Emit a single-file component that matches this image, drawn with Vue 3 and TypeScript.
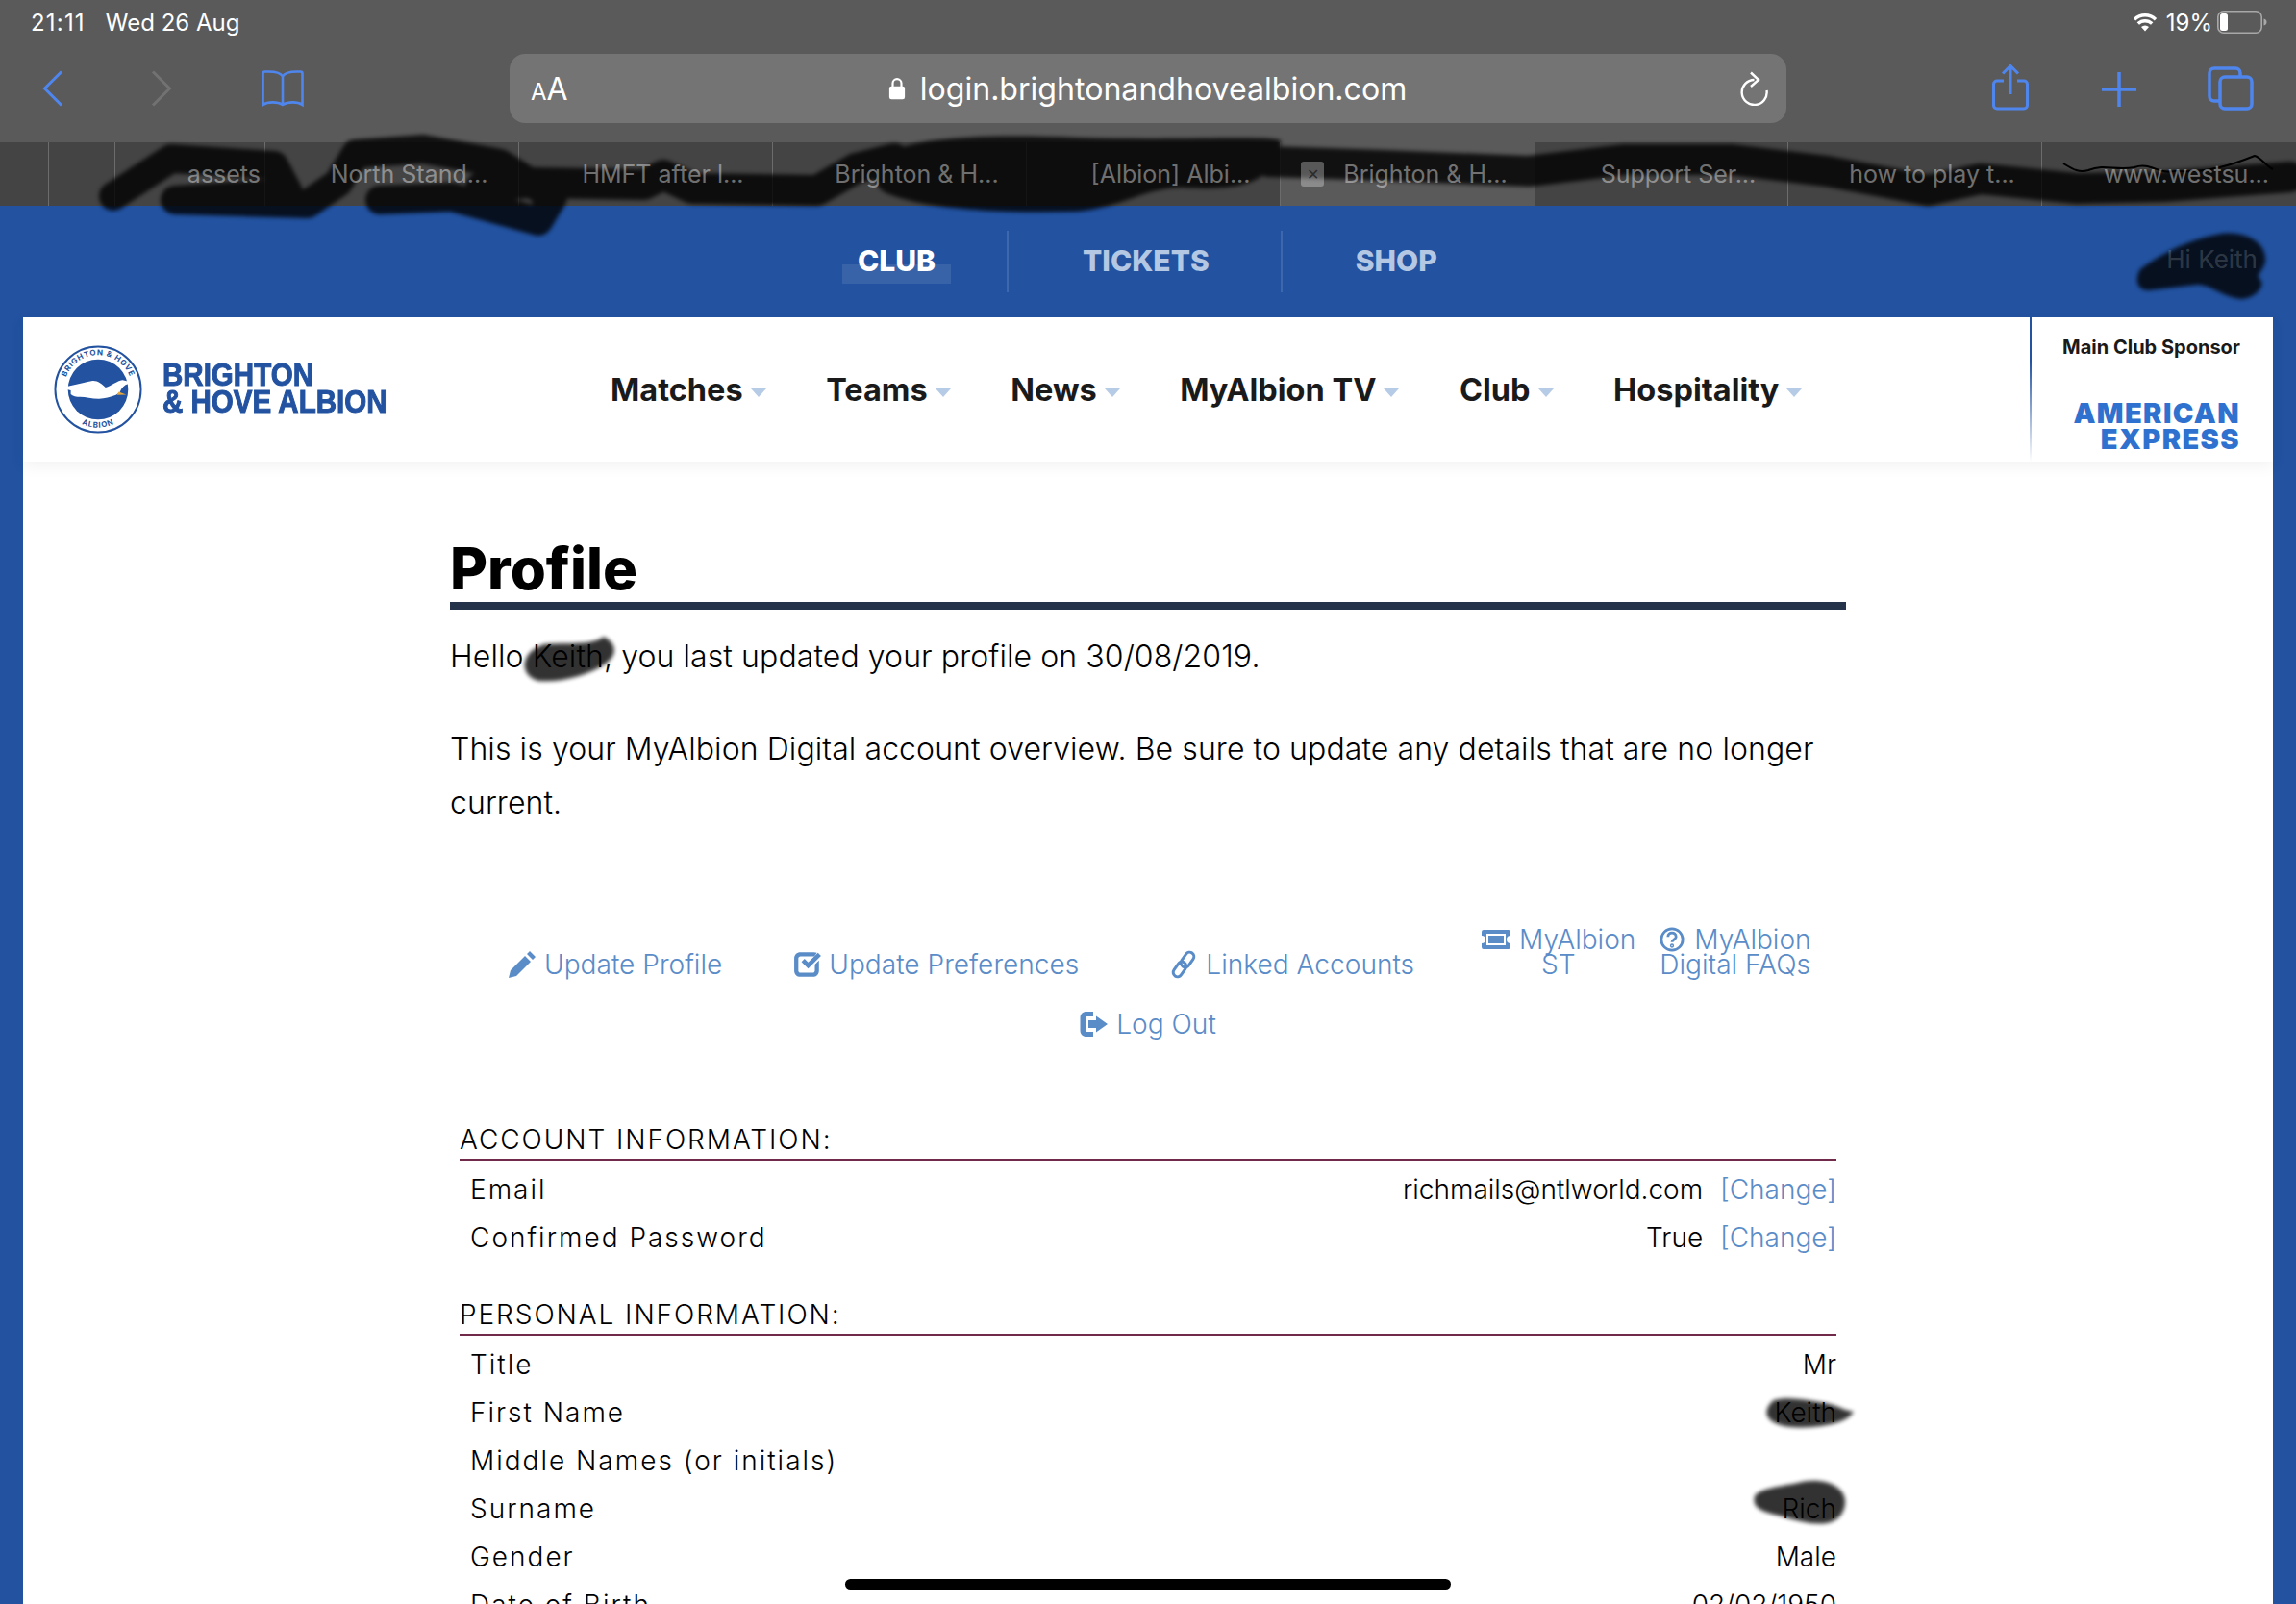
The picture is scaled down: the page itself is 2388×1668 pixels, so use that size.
<script setup lang="ts">
// iPad Safari showing the Albion "Profile" page, scribbles laid on top.
const tabs = [
  { label: '', width: 51 },
  { label: '', width: 69 },
  { label: 'assets', width: 156, clip: true },
  { label: 'North Stand...', width: 264 },
  { label: 'HMFT after l...', width: 264 },
  { label: 'Brighton & H...', width: 264 },
  { label: '[Albion] Albi...', width: 264 },
  { label: 'Brighton & H...', width: 264, active: true },
  { label: 'Support Ser...', width: 264 },
  { label: 'how to play t...', width: 264 },
  { label: 'www.westsu...', width: 264 },
]
const mainNav = ['Matches', 'Teams', 'News', 'MyAlbion TV', 'Club', 'Hospitality']
const personal = [
  ['Title', 'Mr'],
  ['First Name', 'Keith'],
  ['Middle Names (or initials)', ''],
  ['Surname', 'Rich'],
  ['Gender', 'Male'],
  ['Date of Birth', '02/02/1950'],
]
</script>

<template>
  <div class="page">
    <header class="safari">
      <div class="status">
        <span class="time">21:11</span>
        <span class="date">Wed 26 Aug</span>
        <span class="spacer"></span>
        <svg class="wifi" viewBox="0 0 26 20" width="26" height="20">
          <path d="M13 19.500 9 15a6 6 0 0 1 8 0Z" fill="#fff" />
          <path d="M5.800 11.600a10.400 10.400 0 0 1 14.400 0M2 7.200a16 16 0 0 1 22 0" fill="none" stroke="#fff" stroke-width="3.400" />
        </svg>
        <span class="pct">19%</span>
        <svg class="battery" viewBox="0 0 52 24" width="52" height="24">
          <rect x="0.800" y="0.800" width="45.400" height="22.400" rx="6" fill="none" stroke="#a8a8a8" stroke-width="1.600" />
          <rect x="3" y="3" width="8" height="18" rx="2.500" fill="#fff" />
          <path d="M48.500 8.500c2 .6 3 1.800 3 3.500s-1 2.900-3 3.500Z" fill="#a8a8a8" />
        </svg>
      </div>
      <div class="toolbar">
        <svg class="tool back" viewBox="0 0 22 38" width="22" height="38"><path d="M20 1.500 2.500 19 20 36.500" /></svg>
        <svg class="tool fwd" viewBox="0 0 22 38" width="22" height="38"><path d="M2 1.500 19.500 19 2 36.500" /></svg>
        <svg class="tool book" viewBox="0 0 44 38" width="44" height="38">
          <path d="M22 6.500C20 2.500 15 1.500 7 1.500H3.500C2 1.500 1.500 2.200 1.500 3.500V36c5-3.500 15-3.500 20.500 0 5.500-3.500 15.500-3.500 20.500 0V3.500c0-1.300-.5-2-2-2H37c-8 0-13 1-15 5Zm0 0V36" />
        </svg>
        <div class="urlbar">
          <span class="aa"><small>A</small>A</span>
          <span class="url">
            <svg viewBox="0 0 20 26" width="18" height="26">
              <path d="M5 11V7a5 5 0 0 1 10 0v4" fill="none" stroke="#fff" stroke-width="2.400" />
              <rect x="1" y="10.500" width="18" height="15" rx="2.500" fill="#fff" />
            </svg>
            login.brightonandhovealbion.com
          </span>
          <svg class="reload" viewBox="0 0 32 36" width="32" height="36">
            <path d="M28.500 20A13 13 0 1 1 15.500 9" fill="none" stroke="#fff" stroke-width="2.400" />
            <path d="M12 1.500 20 9 12 16" fill="none" stroke="#fff" stroke-width="2.400" />
          </svg>
        </div>
        <svg class="tool share" viewBox="0 0 38 48" width="38" height="48">
          <path d="M12 17H5c-2 0-3.500 1.500-3.500 3.500v22c0 2 1.500 3.500 3.500 3.500h28c2 0 3.500-1.500 3.500-3.500v-22c0-2-1.500-3.500-3.500-3.500h-7M19 31V2M11 9.500 19 1.500l8 8" />
        </svg>
        <svg class="tool plus" viewBox="0 0 36 36" width="36" height="36"><path d="M18 0V36M0 18H36" /></svg>
        <svg class="tool pages" viewBox="0 0 48 46" width="48" height="46">
          <path d="M13 36H7c-3 0-5-2-5-5V7c0-3 2-5 5-5h22c3 0 5 2 5 5v3" />
          <rect x="13" y="11" width="33" height="33" rx="5" />
        </svg>
      </div>
      <div class="tabs">
        <div
          v-for="(tab, i) in tabs"
          :key="i"
          class="tab"
          :class="{ active: tab.active, clip: tab.clip, labelled: tab.label && !tab.active && !tab.clip }"
          :style="{ width: tab.width + 'px' }"
        >
          <span v-if="tab.active" class="tab-close">✕</span>
          <span class="tab-label">{{ tab.label }}</span>
        </div>
      </div>
    </header>

    <div class="club-bar">
      <nav class="club-nav">
        <a class="club-link current"><span>CLUB</span></a>
        <a class="club-link">TICKETS</a>
        <a class="club-link">SHOP</a>
      </nav>
      <span class="hi">Hi Keith</span>
    </div>

    <main class="sheet">
      <div class="mainbar">
        <a class="brand">
          <svg class="crest" viewBox="0 0 94 94" width="92" height="92">
            <defs>
              <path id="arcTop" d="M10.500 47a36.500 36.500 0 0 1 73 0" />
              <path id="arcBottom" d="M6.500 47a40.500 40.500 0 0 0 81 0" />
            </defs>
            <circle cx="47" cy="47" r="45.500" fill="#fff" stroke="#2252a0" stroke-width="2" />
            <circle cx="47" cy="47" r="32" fill="#2252a0" />
            <text class="crest-text"><textPath href="#arcTop" startOffset="50%" text-anchor="middle">BRIGHTON &amp; HOVE</textPath></text>
            <text class="crest-text"><textPath href="#arcBottom" startOffset="50%" text-anchor="middle">ALBION</textPath></text>
            <path d="M5 45C16 44 30 40 40 38 46 37 51 41 55 45 61 43 67 38 73 37 79 38 84 40 89 42L79 41C75 42 72 45 70 50L66 53C60 55 54 57 48 57 40 57 34 55 28 55 24 55 20 54 18 52L18 48C14 47 9 46 5 45Z" fill="#fff" />
            <path d="M69 49.500 77 52.500 67 53Z" fill="#e6a83c" />
          </svg>
          <span class="wordmark">BRIGHTON<br />&amp; HOVE ALBION</span>
        </a>
        <nav class="main-nav">
          <a v-for="item in mainNav" :key="item">{{ item }}<i class="caret"></i></a>
        </nav>
        <div class="sponsor">
          <span class="sponsor-title">Main Club Sponsor</span>
          <span class="amex">AMERICAN<br />EXPRESS</span>
        </div>
      </div>

      <section class="content">
        <h1>Profile</h1>
        <p class="hello">Hello Keith, you last updated your profile on 30/08/2019.</p>
        <p class="intro">This is your MyAlbion Digital account overview. Be sure to update any details that are no longer current.</p>

        <div class="links">
          <a class="link l-profile">
            <svg viewBox="0 0 30 30" width="30" height="30"><path d="M1 29l2-8L18 6l6 6L9 27Zm19-25 3-3 6 6-3 3Z" /></svg>
            Update Profile
          </a>
          <a class="link l-prefs">
            <svg viewBox="0 0 26 28" width="28" height="30">
              <path d="M6 2h13c1 0 2 .2 3 .6L19.500 6H6C5 6 4 7 4 8v12c0 1 1 2 2 2h12c1 0 2-1 2-2v-6l4-4v10c0 3.500-2.500 6-6 6H6c-3.500 0-6-2.500-6-6V8c0-3.500 2.500-6 6-6Z" />
              <path d="M7 11.500l3-3 3.500 3.500L23 2.500l3 3-12.500 12.500Z" />
            </svg>
            Update Preferences
          </a>
          <a class="link l-linked">
            <svg viewBox="0 0 26 30" width="26" height="30" class="stroked">
              <rect x="12.500" y="1.500" width="9" height="17" rx="4.500" transform="rotate(35 17 10)" />
              <rect x="4.500" y="11.500" width="9" height="17" rx="4.500" transform="rotate(35 9 20)" />
            </svg>
            Linked Accounts
          </a>
          <a class="link stack l-st">
            <span class="line1">
              <svg viewBox="0 0 32 22" width="32" height="22">
                <path fill-rule="evenodd" d="M3 1h26a2 2 0 0 1 2 2v4a4 4 0 0 0 0 8v4a2 2 0 0 1-2 2H3a2 2 0 0 1-2-2v-4a4 4 0 0 0 0-8V3a2 2 0 0 1 2-2Zm3 4v12h20V5Z" />
                <rect x="8" y="7" width="16" height="8" />
              </svg>
              MyAlbion
            </span>
            <span class="line2 st-line">ST</span>
          </a>
          <a class="link stack l-faq">
            <span class="line1">
              <svg viewBox="0 0 28 28" width="26" height="26" class="stroked">
                <circle cx="14" cy="14" r="12" />
                <path d="M9.500 11c0-6 9-6 9 0 0 3-4.500 3-4.500 6" />
                <circle cx="14" cy="21" r=".8" />
              </svg>
              MyAlbion
            </span>
            <span class="line2">Digital FAQs</span>
          </a>
          <a class="link l-logout">
            <svg viewBox="0 0 30 30" width="30" height="30">
              <path d="M7 2h7v5H8C7 7 6.500 7.500 6.500 8.500v13c0 1 .5 1.500 1.500 1.500h6v5H7c-4 0-6.500-2.500-6.500-6.500v-13C.5 4.500 3 2 7 2Z" />
              <path d="M17 6.500 29 15 17 23.500V19H9v-8h8Z" />
            </svg>
            Log Out
          </a>
        </div>

        <div class="info">
          <h2>ACCOUNT INFORMATION:</h2>
          <div class="row first">
            <span>Email</span>
            <span class="value">richmails@ntlworld.com <a class="change">[Change]</a></span>
          </div>
          <div class="row">
            <span>Confirmed Password</span>
            <span class="value">True <a class="change">[Change]</a></span>
          </div>
          <h2 class="second">PERSONAL INFORMATION:</h2>
          <div v-for="(row, i) in personal" :key="row[0]" class="row" :class="{ first: i === 0 }">
            <span>{{ row[0] }}</span>
            <span class="value">{{ row[1] }}</span>
          </div>
        </div>
      </section>
    </main>

    <!-- marker scribbles sit above the page; tab labels show through them -->
    <svg class="scribbles" viewBox="0 0 2388 1668" width="2388" height="1668">
      <g class="ink">
        <path class="band" d="M118 204 178 165 285 172 M285 172 300 200 182 208 320 212 352 190 370 160 440 155 520 170 575 205 560 230 470 205 395 208" stroke-width="30" />
        <path class="band" d="M500 195 550 190 670 192 690 182 720 196 850 198 890 175 930 165" stroke-width="32" />
        <path class="fill" d="M920 160C960 140 1040 140 1120 143 1230 146 1320 140 1332 146 1328 185 1300 200 1230 195 1190 195 1170 215 1120 220 1040 222 960 218 920 200 905 190 905 172 920 160Z" />
        <path class="band" d="M1320 168 1440 172 1590 178 1690 166 1800 166 1900 178 2005 198 2060 186 2160 196 2250 194 2382 184" stroke-width="32" />
        <path class="fill" d="M2310 243C2340 240 2358 255 2356 272 2354 282 2346 285 2350 290 2358 296 2345 312 2330 311 2310 308 2300 296 2285 296L2235 302C2222 302 2220 290 2226 280 2250 262 2280 248 2310 243Z" />
        <path class="fill" d="M566 670C585 668 615 672 628 662 640 668 644 680 630 690 612 702 585 710 560 708 545 704 542 690 550 680 554 675 560 672 566 670Z" />
        <path class="fill" d="M1845 1456C1860 1452 1878 1456 1892 1458 1910 1460 1915 1466 1928 1468 1922 1478 1905 1482 1885 1484 1860 1486 1842 1482 1838 1472 1836 1466 1840 1460 1845 1456Z" />
        <path class="fill" d="M1870 1542C1895 1535 1918 1545 1919 1560 1920 1572 1912 1582 1900 1584 1885 1586 1870 1582 1850 1576 1832 1572 1822 1568 1825 1556 1830 1548 1850 1546 1870 1542Z" />
      </g>
      <path class="squiggle" d="M2146 170C2156 176 2162 180 2172 177 2190 170 2200 178 2220 174 2236 168 2246 182 2262 178 2296 180 2320 172 2345 162 2352 164 2356 172 2364 176" />
    </svg>

    <div class="home-bar"></div>
  </div>
</template>

<style scoped>
.page {
  position: relative;
  width: 2388px;
  height: 1668px;
  overflow: hidden;
  background: #2252a0;
  font-family: Inter, "Liberation Sans", sans-serif;
  color: #111;
}
.safari {
  background: #5a5a5a;
  color: #fff;
}
.status {
  height: 46px;
  display: flex;
  align-items: center;
  padding: 0 30px 0 32px;
  font-size: 24px;
}
.time { letter-spacing: 1.200px; }
.date { margin-left: 21px; }
.spacer { flex: 1; }
.wifi { margin-right: 9px; }
.pct { font-size: 24px; margin-right: 5px; }
.toolbar {
  height: 102px;
  display: flex;
  align-items: flex-start;
  position: relative;
}
.tool {
  fill: none;
  stroke: #4f86ee;
  stroke-width: 3;
  flex: none;
}
.back { margin: 27px 0 0 44px; }
.fwd { margin: 27px 0 0 91px; stroke: #727272; }
.book { margin: 27px 0 0 93px; stroke-width: 2.600; }
.urlbar {
  margin: 10px 0 0 214px;
  width: 1328px;
  height: 72px;
  flex: none;
  border-radius: 16px;
  background: #747474;
  display: flex;
  align-items: center;
  justify-content: center;
  position: relative;
}
.aa {
  position: absolute;
  left: 22px;
  font-size: 32px;
}
.aa small { font-size: 24px; }
.url {
  display: flex;
  align-items: center;
  gap: 15px;
  font-size: 32.100px;
  margin-left: -1px;
}
.reload {
  position: absolute;
  right: 17px;
  top: 18px;
}
.share { margin: 21px 0 0 214px; }
.plus { margin: 29px 0 0 76px; stroke-width: 3.500; }
.pages { margin: 23px 0 0 74px; stroke-width: 3.500; }
.tabs {
  height: 66px;
  display: flex;
  background: #444;
  font-size: 25px;
}
.tab {
  flex: none;
  display: flex;
  align-items: center;
  justify-content: center;
  border-right: 1px solid #6c6c6c;
  box-sizing: border-box;
  white-space: nowrap;
  overflow: hidden;
}
.tab:last-child { border-right: 0; }
.tab.labelled { padding-left: 36px; }
.tab.clip { justify-content: flex-end; padding-right: 4px; }
.tab.active {
  background: #5a5a5a;
  border-right-color: #5a5a5a;
  gap: 20px;
  padding-right: 6px;
}
.tab-label {
  position: relative;
  z-index: 3;
  color: rgba(255, 255, 255, 0.42);
}
.tab-close {
  position: relative;
  z-index: 3;
  width: 24px;
  height: 26px;
  border-radius: 3px;
  background: rgba(255, 255, 255, 0.3);
  color: #2b2b2b;
  font-size: 16px;
  display: flex;
  align-items: center;
  justify-content: center;
}
.club-bar {
  height: 116px;
  display: flex;
  align-items: center;
  position: relative;
}
.club-nav {
  display: flex;
  margin-left: 876px;
  height: 64px;
  align-items: center;
}
.club-link {
  font-size: 30px;
  font-weight: 800;
  color: #b4c7e3;
  height: 64px;
  box-sizing: border-box;
  padding: 0 74px 2px 77px;
  display: flex;
  align-items: center;
  border-right: 2px solid #3e68ad;
}
.club-link:last-child { border-right: 0; padding-left: 76px; }
.club-link.current {
  color: #fff;
  padding: 0 74px 2px 16px;
}
.club-link.current span {
  position: relative;
}
.club-link.current span::after {
  content: "";
  position: absolute;
  left: -16px;
  right: -16px;
  top: 22px;
  height: 20px;
  background: rgba(255, 255, 255, 0.1);
}
.hi {
  position: absolute;
  right: 40px;
  top: 40px;
  z-index: 3;
  font-size: 26px;
  color: rgba(255, 255, 255, 0.18);
}
.sheet {
  margin: 0 24px;
  height: 1338px;
  background: #fff;
}
.mainbar {
  height: 150px;
  display: flex;
  align-items: center;
  position: relative;
  box-shadow: 0 4px 16px rgba(0, 0, 0, 0.06);
}
.brand {
  display: flex;
  align-items: center;
  margin-left: 32px;
  width: 579px;
  gap: 21px;
  flex: none;
}
.crest { flex: none; }
.crest-text {
  font-size: 8.200px;
  font-weight: 700;
  letter-spacing: 0.800px;
  fill: #2252a0;
}
.wordmark {
  font-family: "Liberation Sans", sans-serif;
  font-size: 33px;
  line-height: 28px;
  font-weight: 700;
  color: #2252a0;
  -webkit-text-stroke: 1px #2252a0;
  margin-top: -2px;
  white-space: nowrap;
  transform: scaleX(0.895);
  transform-origin: left center;
}
.main-nav {
  display: flex;
  flex: none;
  width: 1476px;
  font-size: 32.500px;
  font-weight: 700;
  color: #1a1a1a;
}
.main-nav a {
  display: flex;
  align-items: center;
  margin-right: 62.500px;
}
.caret {
  width: 0;
  height: 0;
  margin: 7px 0 0 8px;
  border-left: 8px solid transparent;
  border-right: 8px solid transparent;
  border-top: 9px solid #b6cbe6;
}
.sponsor {
  align-self: stretch;
  flex: none;
  width: 252px;
  box-sizing: border-box;
  padding: 19px 33px 0 0;
  text-align: right;
  position: relative;
}
.sponsor::before {
  content: "";
  position: absolute;
  left: 0;
  top: 0;
  bottom: 0;
  width: 2px;
  background: linear-gradient(#2252a0 30%, rgba(34, 82, 160, 0));
}
.sponsor-title {
  display: block;
  font-size: 20px;
  font-weight: 700;
  line-height: 24px;
  color: #1a1a1a;
}
.amex {
  display: block;
  margin-top: 43px;
  font-size: 29px;
  line-height: 27px;
  letter-spacing: 1.400px;
  font-weight: 900;
  color: #2f71ce;
}
.content {
  width: 1452px;
  margin-left: 444px;
}
h1 {
  margin: 0;
  padding-top: 77px;
  font-size: 60px;
  line-height: 69px;
  font-weight: 800;
  color: #000;
  border-bottom: 8px solid #24324a;
}
.hello, .intro {
  margin: 0;
  font-size: 32px;
  line-height: 56px;
  font-weight: 300;
  letter-spacing: 0.090px;
  color: #000;
}
.hello { padding-top: 21px; }
.intro { padding-top: 40px; }
.links {
  display: flex;
  flex-wrap: wrap;
  align-items: flex-end;
  padding-top: 101px;
  color: #5a8cc8;
  font-size: 28.100px;
  line-height: 26px;
  font-weight: 300;
}
.link {
  display: flex;
  align-items: center;
  gap: 8px;
  white-space: nowrap;
}
.link svg { fill: #5a8cc8; flex: none; margin-block: -4px; }
.link svg.stroked {
  fill: none;
  stroke: #5a8cc8;
  stroke-width: 3;
}
.stack {
  flex-direction: column;
  align-items: flex-start;
  gap: 0;
}
.line1 {
  display: flex;
  align-items: center;
  gap: 8px;
}
.st-line { align-self: center; }
.l-profile { margin-left: 60px; }
.l-prefs { margin-left: 75px; }
.l-linked { margin-left: 96px; gap: 10px; }
.l-st { margin-left: 69px; }
.l-faq { margin-left: 25px; }
.l-faq .line1 { gap: 10px; }
.l-logout {
  flex-basis: 100%;
  justify-content: center;
  padding-top: 36px;
}
.info { padding: 90px 10px 0; }
h2 {
  margin: 0;
  height: 37px;
  font-size: 28px;
  font-weight: 300;
  line-height: 34px;
  letter-spacing: 1.930px;
  color: #000;
  border-bottom: 2px solid #722a4a;
}
h2.second { margin-top: 38px; }
.row {
  height: 50px;
  display: flex;
  align-items: center;
  justify-content: space-between;
  padding-left: 11px;
  font-size: 28px;
  font-weight: 300;
  letter-spacing: 2px;
  color: #000;
}
.row.first { margin-top: 5px; }
.value { letter-spacing: 0; }
.change {
  color: #5a8cc8;
  margin-left: 10px;
}
.scribbles {
  position: absolute;
  left: 0;
  top: 0;
  z-index: 2;
  pointer-events: none;
}
.ink {
  opacity: 0.8;
  filter: blur(2px);
}
.band {
  fill: none;
  stroke: #000;
  stroke-linejoin: round;
  stroke-linecap: round;
}
.fill { fill: #000; }
.squiggle {
  fill: none;
  stroke: #000;
  stroke-width: 2;
}
.home-bar {
  position: absolute;
  left: 879px;
  top: 1642px;
  z-index: 3;
  width: 630px;
  height: 11px;
  border-radius: 6px;
  background: #000;
}
</style>
